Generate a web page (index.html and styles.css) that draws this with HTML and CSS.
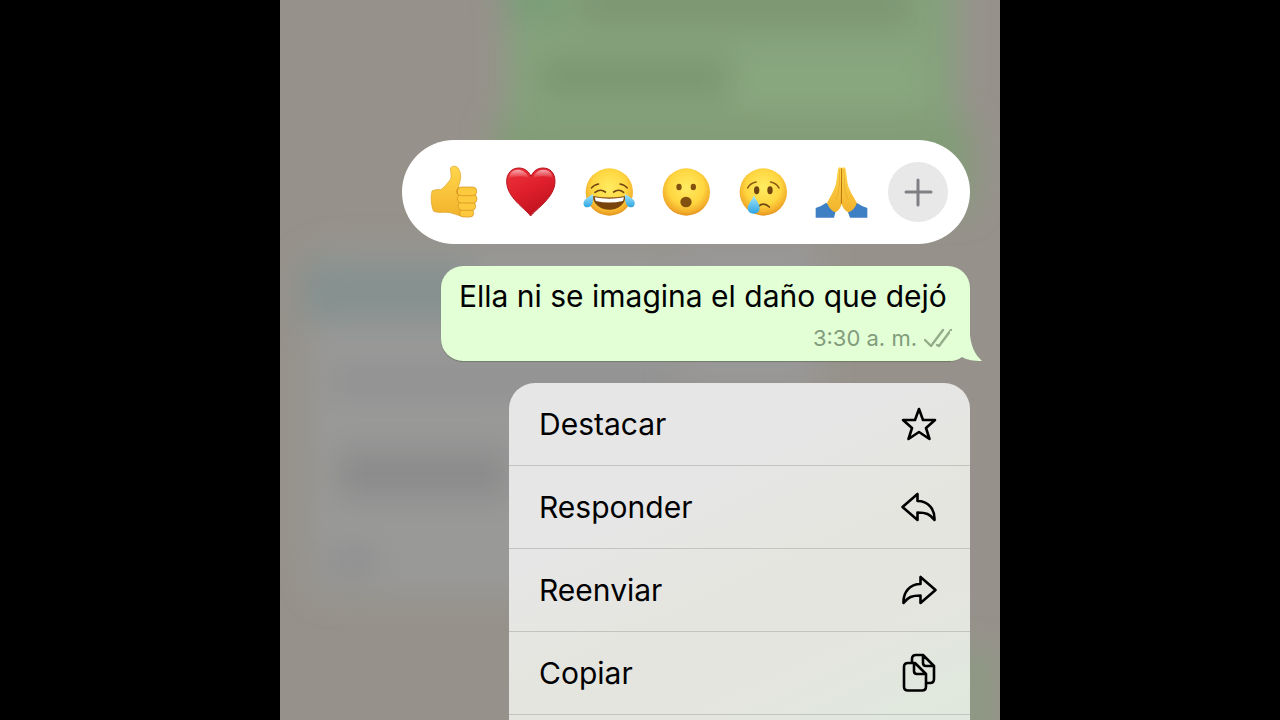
FILE: index.html
```html
<!DOCTYPE html>
<html lang="es">
<head>
    <meta charset="UTF-8">
    <meta name="viewport" content="width=device-width, initial-scale=1.0">
    <title>Chat</title>
    <link rel="stylesheet" href="styles.css">
</head>
<body>
    <main class="screen">
        <!-- blurred conversation behind the menu -->
        <svg class="backdrop" viewBox="0 0 720 720" preserveAspectRatio="xMidYMin slice" aria-hidden="true">
            <defs>
                <filter id="soft" x="-30%" y="-50%" width="160%" height="200%"><feGaussianBlur stdDeviation="15"/></filter>
            </defs>
            <rect width="720" height="720" fill="#96928b"/>
            <g filter="url(#soft)">
                <rect x="30" y="250" width="365" height="345" rx="24" fill="#999998"/>
                <rect x="228" y="-60" width="447" height="190" fill="#84a27b"/>
                <rect x="215" y="120" width="475" height="90" fill="#829c77"/>
                <rect x="225" y="-30" width="60" height="50" fill="#7a9d78"/>
                <rect x="300" y="-15" width="330" height="38" fill="#7b9571"/>
                <rect x="262" y="60" width="185" height="34" fill="#7a9571"/>
                <rect x="460" y="55" width="180" height="50" fill="#89a77f"/>
                <rect x="22" y="262" width="170" height="60" fill="#859190"/>
                <rect x="50" y="370" width="345" height="22" fill="#8f8f90"/>
                <rect x="58" y="450" width="170" height="48" fill="#8b8b8b"/>
                <rect x="50" y="550" width="45" height="24" fill="#8d8d8e"/>
                <rect x="400" y="240" width="140" height="150" fill="#999898"/>
                <rect x="690" y="650" width="16" height="110" fill="#84a079"/>
            </g>
        </svg>

        <div class="reactions">
            <button class="reaction" type="button" aria-label="Me gusta">
                <svg viewBox="12 21 180 180">
                    <defs>
                        <linearGradient id="hand" x1="0" y1="0" x2="0" y2="1"><stop offset="0" stop-color="#ffd64b"/><stop offset="1" stop-color="#f2b32c"/></linearGradient>
                    </defs>
                    <path d="M36 108Q44 102 62 104C72 98 84 84 92 72C96 62 90 46 92 38Q96 32 106 34C118 37 122 54 122 65C122 76 117 88 115 99L151 98V180L136 184Q118 184 104 177Q90 171 72 172Q54 174 41 169C34 154 31 127 36 108Z" fill="url(#hand)" stroke="#dda129" stroke-width="2"/>
                    <g fill="#fcca3c" stroke="#d18d1d" stroke-width="2">
                        <rect x="119" y="162" width="42" height="24" rx="11"/>
                        <rect x="114" y="141" width="53" height="25" rx="12"/>
                        <rect x="112" y="119" width="59" height="25" rx="12"/>
                        <rect x="111" y="96" width="59" height="26" rx="12"/>
                    </g>
                    <path d="M115 99Q108 106 112 118" fill="none" stroke="#d18d1d" stroke-width="3"/>
                </svg>
            </button>
            <button class="reaction" type="button" aria-label="Me encanta">
                <svg viewBox="304 81 180 180">
                    <defs>
                        <linearGradient id="heart" x1="0" y1="0" x2=".5" y2="1"><stop offset="0" stop-color="#ee343d"/><stop offset=".55" stop-color="#de1f2b"/><stop offset="1" stop-color="#c0131f"/></linearGradient>
                        <linearGradient id="shine" x1="0" y1="0" x2="0" y2="1"><stop offset="0" stop-color="#fff" stop-opacity=".6"/><stop offset="1" stop-color="#fff" stop-opacity="0"/></linearGradient>
                    </defs>
                    <path d="M393 243C377 221 321 188 321 139C321 115 336 99 358 99C376 99 389 111 394 125C399 111 411 99 430 99C452 99 466 115 466 139C466 187 410 221 393 243Z" fill="url(#heart)" stroke="#b7141f" stroke-width="3"/>
                    <path d="M328 130C330 111 342 103 357 104C370 105 382 114 387 128Q357 118 328 130ZM401 128C406 112 417 104 431 104C447 104 458 113 460 130Q431 118 401 128Z" fill="url(#shine)"/>
                </svg>
            </button>
            <button class="reaction" type="button" aria-label="Me divierte">
                <svg viewBox="536 81 180 180">
                    <defs>
                        <radialGradient id="face" cx=".5" cy=".4" r=".62"><stop offset="0" stop-color="#ffec62"/><stop offset=".6" stop-color="#fed640"/><stop offset=".85" stop-color="#f3ae2b"/><stop offset="1" stop-color="#dd8a1c"/></radialGradient>
                        <linearGradient id="tear" x1="0" y1="0" x2="0" y2="1"><stop offset="0" stop-color="#a5e6fb"/><stop offset="1" stop-color="#2ea4e3"/></linearGradient>
                    </defs>
                    <circle cx="627" cy="171" r="71" fill="url(#face)"/>
                    <g fill="none" stroke="#704411" stroke-width="5" stroke-linecap="round">
                        <path d="M584 172Q600 160 615 171M640 171Q655 160 670 172"/>
                        <path d="M573 159Q581 149 595 147M681 159Q673 149 659 147" stroke-width="4"/>
                    </g>
                    <path d="M578 183Q627 192 675 183C676 207 654 224 627 224S577 207 578 183Z" fill="#79430c"/>
                    <path d="M583 187Q627 195 671 187L668 198Q627 207 586 198Z" fill="#fff"/>
                    <path d="M578 177C580 197 576 217 561 217C549 217 546 203 554 194Q562 186 578 177Z" fill="url(#tear)"/>
                    <path d="M674 177C672 197 677 217 691 217C703 217 707 203 699 194Q690 186 674 177Z" fill="url(#tear)"/>
                </svg>
            </button>
            <button class="reaction" type="button" aria-label="Me asombra">
                <svg viewBox="768 81 180 180">
                    <circle cx="859" cy="171" r="71" fill="url(#face)"/>
                    <ellipse cx="837" cy="156" rx="8" ry="10" fill="#82500f"/>
                    <ellipse cx="880" cy="156" rx="8" ry="10" fill="#82500f"/>
                    <ellipse cx="858" cy="201" rx="17" ry="16" fill="#82500f"/>
                </svg>
            </button>
            <button class="reaction" type="button" aria-label="Me entristece">
                <svg viewBox="130 81 180 180">
                    <circle cx="221" cy="171" r="71" fill="url(#face)"/>
                    <ellipse cx="201" cy="166" rx="8" ry="12" fill="#704411"/>
                    <ellipse cx="241" cy="166" rx="8" ry="12" fill="#704411"/>
                    <path d="M174 159Q181 145 199 141M243 141Q261 145 268 159" fill="none" stroke="#8a5715" stroke-width="5" stroke-linecap="round"/>
                    <path d="M206 214Q223 200 239 216" fill="none" stroke="#704411" stroke-width="5" stroke-linecap="round"/>
                    <path d="M193 181C197 194 210 206 210 219C210 231 202 236 192 236S174 230 174 219C174 207 188 195 193 181Z" fill="url(#tear)"/>
                </svg>
            </button>
            <button class="reaction" type="button" aria-label="Gracias">
                <svg viewBox="17 21 180 180">
                    <path d="M31 159Q46 155 63 143L91 169L86 188H31ZM186 159Q171 155 154 143L127 169L134 188H186Z" fill="#3f7fc3"/>
                    <path d="M109 39Q100 33 98 42L92 87C86 108 74 126 65 144Q75 168 90 172C101 166 108 155 109 146C111 155 117 166 129 172Q145 168 155 144C146 126 132 108 127 87L121 42Q118 33 109 39Z" fill="url(#hand)"/>
                    <path d="M109 40L108 146" stroke="#b8710d" stroke-width="3" fill="none"/>
                    <path d="M103 42L102 90Q100 118 92 134M116 42L117 90Q119 118 128 134" stroke="#e5a626" stroke-width="2" fill="none"/>
                </svg>
            </button>
            <button class="reaction more" type="button" aria-label="Más reacciones">
                <svg viewBox="0 0 60 60"><path d="M30 18v25M18 30h25" fill="none" stroke="#808084" stroke-width="3" stroke-linecap="round"/></svg>
            </button>
        </div>

        <article class="bubble">
            <p class="message">Ella ni se imagina el daño que dejó</p>
            <div class="meta">
                <time datetime="03:30">3:30 a. m.</time>
                <svg class="checks" viewBox="0 0 28 20" aria-hidden="true"><path d="M1 12l6 6L19 2M13 17l2 1L27 2" fill="none" stroke="#93ad8b" stroke-width="2.4" stroke-linecap="round" stroke-linejoin="round"/></svg>
            </div>
            <svg class="tail" viewBox="0 0 32 30" aria-hidden="true"><path d="M0 0H20V4C21 15 25 24 32 30C24 30 17 29 12 26Q7 30 0 30Z" fill="#e2ffd6"/></svg>
        </article>

        <div class="menu">
            <button class="item" type="button">
                Destacar
                <svg viewBox="0 0 36 40"><path d="M18 5L22 16L34 16L25 24L28.500 35L18 28L7.500 35L11 24L2 16L14 16Z"/></svg>
            </button>
            <button class="item" type="button">
                Responder
                <svg viewBox="0 0 36 40"><path d="M1.500 20L16.500 7V14C27 14 34 22 33.500 33C29 27 25 25.500 16.500 25.500V33Z"/></svg>
            </button>
            <button class="item" type="button">
                Reenviar
                <svg viewBox="0 0 36 40"><path d="M34.500 20L19.500 7V14C9 14 2 22 2.500 33C7 27 11 25.500 19.500 25.500V33Z"/></svg>
            </button>
            <button class="item" type="button">
                Copiar
                <svg viewBox="0 0 36 40"><path d="M14 10H7Q3 10 3 14V33.500Q3 37.500 7 37.500H21Q25 37.500 25 33.500V21ZM13 10V18Q13 21 16 21H25M11 10V6Q11 2 15 2H22L33 13V26Q33 30 29 30H25M22 2V10Q22 13 25 13H33"/></svg>
            </button>
        </div>
    </main>
</body>
</html>
```
FILE: styles.css
```css
* {
    box-sizing: border-box;
}
body {
    margin: 0;
    background-color: #000;
    font-family: Inter, "Liberation Sans", sans-serif;
    color: #000;
}
button {
    border: none;
    background: none;
    padding: 0;
    font: inherit;
    color: inherit;
    cursor: pointer;
}
.screen {
    position: relative;
    display: flex;
    flex-direction: column;
    align-items: flex-end;
    gap: 22px;
    max-width: 720px;
    height: 100vh;
    margin: 0 auto;
    padding: 140px 30px 0;
    overflow: hidden;
}
.backdrop {
    position: absolute;
    inset: 0;
    width: 100%;
    height: 100%;
    z-index: -1;
}
.reactions {
    display: flex;
    align-items: center;
    justify-content: space-between;
    width: 100%;
    max-width: 568px;
    padding: 22px;
    border-radius: 52px;
    background-color: #fff;
}
.reaction {
    width: 60px;
    height: 60px;
}
.reaction svg {
    display: block;
    width: 100%;
}
.more {
    border-radius: 50%;
    background-color: #e8e8e9;
}
.bubble {
    position: relative;
    width: 100%;
    max-width: 529px;
    padding: 9px 18px 2px;
    border-radius: 22px;
    background-color: #e2ffd6;
    box-shadow: 0 1px 1px rgba(60, 80, 50, 0.4);
}
.message {
    margin: 0;
    font-size: 30px;
    line-height: 42px;
}
.meta {
    display: flex;
    align-items: center;
    justify-content: flex-end;
    gap: 7px;
    color: #839c7c;
    font-size: 22px;
    line-height: 42px;
}
.checks {
    width: 28px;
    height: 20px;
}
.tail {
    position: absolute;
    right: -12px;
    bottom: 0;
    width: 32px;
    height: 30px;
}
.menu {
    flex: 1 0 auto;
    width: 100%;
    max-width: 461px;
    border-radius: 26px 26px 0 0;
    background: linear-gradient(155deg, #e6e6e7 30%, #e5e5e0 55%, #e4e5df 75%, #e0e8dd 95%);
}
.item {
    display: flex;
    align-items: center;
    justify-content: space-between;
    width: 100%;
    height: 83px;
    padding: 0 33px 0 30px;
    border-bottom: 1px solid #c3c4c0;
    font-size: 30px;
}
.item svg {
    width: 36px;
    height: 40px;
    fill: none;
    stroke: #000;
    stroke-width: 2.6;
    stroke-linejoin: round;
    stroke-linecap: round;
}
```
